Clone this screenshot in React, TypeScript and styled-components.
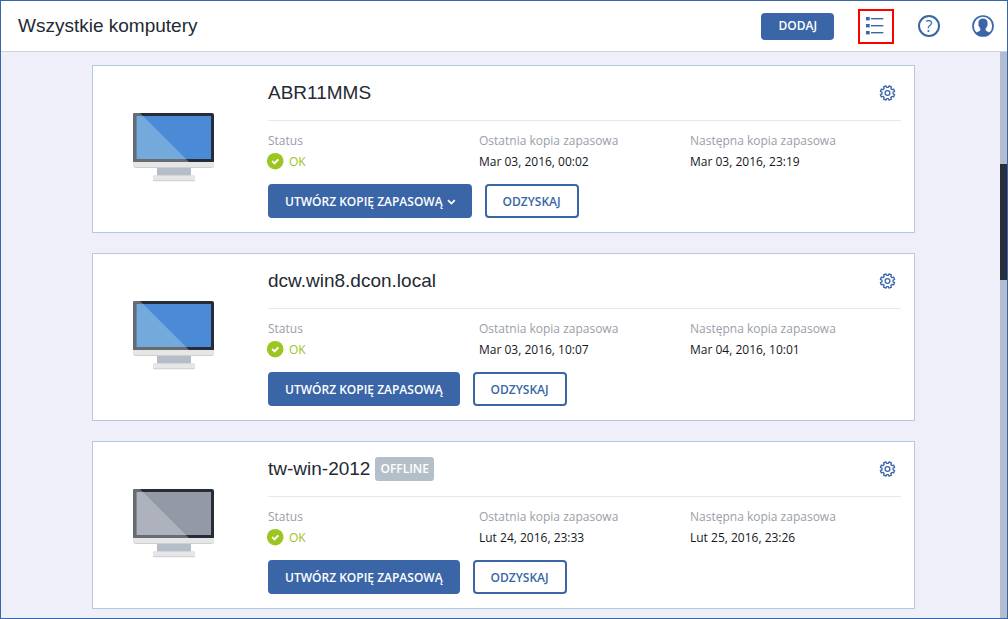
import React from 'react';
import styled, { createGlobalStyle } from 'styled-components';

const BLUE = '#3a66a7';

const GlobalStyle = createGlobalStyle`
  *, *::before, *::after { box-sizing: border-box; }
  body { margin: 0; }
  button { font: inherit; cursor: pointer; }
`;

const Page = styled.div`
  position: relative;
  display: flex;
  flex-direction: column;
  height: 100vh;
  border: 1px solid ${BLUE};
  background: #eeeff8;
  color: #242a33;
  font: 12px/20px 'Open Sans', 'Noto Sans', sans-serif;
`;

const TopBar = styled.header`
  display: flex;
  flex: none;
  align-items: center;
  justify-content: space-between;
  height: 51px;
  padding: 0 13px 0 17px;
  border-bottom: 1px solid #cdd3e5;
  background: #fff;
`;

const PageTitle = styled.h1`
  margin: 0;
  font: 400 19px/24px 'Liberation Sans', Arial, sans-serif;
`;

const Actions = styled.div<{ $gap: number }>`
  display: flex;
  align-items: center;
  gap: ${(p) => p.$gap}px;
`;

const AddButton = styled.button`
  height: 27px;
  padding: 0 17px;
  border: 0;
  border-radius: 4px;
  background: ${BLUE};
  color: #fff;
  font-weight: 600;
`;

const HighlightedButton = styled.button`
  display: grid;
  place-items: center;
  width: 36px;
  height: 35px;
  padding: 0;
  border: 2px solid #f00;
  background: none;
`;

const RoundButton = styled.button`
  display: grid;
  place-items: center;
  width: 22px;
  height: 22px;
  padding: 0;
  border: 0;
  border-radius: 50%;
  background: none;
  color: ${BLUE};
`;

const HelpButton = styled(RoundButton)`
  border: 2px solid ${BLUE};
  font-size: 16px;
  font-weight: 500;
  line-height: 18px;
`;

const Content = styled.main`
  flex: 1;
  min-height: 0;
  overflow: hidden;
`;

const CardList = styled.div`
  display: flex;
  flex-direction: column;
  gap: 20px;
  padding: 13px 92px 10px 91px;
`;

const ScrollTrack = styled.div`
  position: absolute;
  top: 51px;
  right: 0;
  bottom: 0;
  width: 7px;
  padding-top: 112px;
  background: #b3bdd0;
`;

const ScrollThumb = styled.div`
  height: 116px;
  background: #29303b;
`;

const Card = styled.article`
  display: grid;
  grid-template-columns: 175px 1fr;
  padding: 0 13px 14px 0;
  border: 1px solid #b5c8e1;
  background: #fff;
`;

const Picture = styled.div`
  padding: 47px 0 0 40px;
`;

const CardHeader = styled.header`
  display: flex;
  align-items: center;
  height: 55px;
  border-bottom: 1px solid #e8e8e8;
`;

const MachineName = styled.h2`
  margin: 0;
  font: 400 19px/24px 'Liberation Sans', Arial, sans-serif;
`;

const OfflineBadge = styled.span`
  height: 24px;
  margin-left: 5px;
  padding: 0 5px;
  border-radius: 3px;
  background: #b5bfc9;
  color: #fff;
  font-weight: 600;
  line-height: 24px;
`;

const GearButton = styled.button`
  display: flex;
  margin-left: auto;
  padding: 0 6px 0 0;
  border: 0;
  background: none;
`;

const Facts = styled.dl`
  display: grid;
  grid-template-columns: repeat(3, 1fr);
  margin: 0;
  padding-top: 10px;
`;

const Label = styled.dt`
  color: #9a9ea8;
`;

const Value = styled.dd<{ $ok?: boolean }>`
  display: flex;
  align-items: center;
  gap: 5px;
  margin: 0;
  color: ${(p) => (p.$ok ? '#9bc521' : '#14181e')};
  line-height: 21px;
`;

const CardActions = styled.div`
  display: flex;
  gap: 13px;
  margin-top: 12px;
`;

const ActionButton = styled.button<{ $primary?: boolean }>`
  display: flex;
  align-items: center;
  gap: 4px;
  height: 34px;
  padding: 1px ${(p) => (p.$primary ? 15 : 16)}px 0;
  border: 2px solid ${BLUE};
  border-radius: 4px;
  background: ${(p) => (p.$primary ? BLUE : '#fff')};
  color: ${(p) => (p.$primary ? '#fff' : BLUE)};
  font-weight: 600;
`;

const ListIcon = () => (
  <svg width="20" height="18" viewBox="0 0 20 18" fill={BLUE} aria-hidden="true">
    {[0, 7, 14].map((y) => (
      <React.Fragment key={y}>
        <rect x="0" y={y} width="3.7" height="3.4" />
        <rect x="5" y={y + 1} width="12.3" height="1.4" />
      </React.Fragment>
    ))}
  </svg>
);

const UserIcon = () => (
  <svg width="22" height="22" viewBox="0 0 22 22" aria-hidden="true">
    <circle cx="11" cy="11" r="10" fill="#fff" stroke={BLUE} strokeWidth="1.7" />
    <path
      fill={BLUE}
      d="M11 3.4c2.9 0 4.6 1.7 4.6 4.3 0 .7-.1 1.1-.2 1.5.5.3.3 1.5-.4 2-.3 1-.7 1.7-1.3 2.2v2c.4.9 3 1.300 4.600 2.300C16.400 19.900 13.800 21 11 21s-5.400-1.100-7.300-3.300c1.600-1 4.200-1.400 4.600-2.300v-2c-.6-.5-1-1.200-1.300-2.200-.7-.5-.9-1.700-.4-2-.1-.4-.2-.8-.2-1.500C6.400 5.100 8.100 3.400 11 3.400z"
    />
  </svg>
);

const GEAR_TEETH = Array.from({ length: 8 }, (_, i) => {
  const at = (deg: number, r: number) => {
    const a = ((i * 45 + 22.5 + deg) * Math.PI) / 180;
    return `${(8.5 + r * Math.cos(a)).toFixed(2)} ${(8 + r * Math.sin(a)).toFixed(2)}`;
  };
  return `${at(-14, 5.6)} L${at(-10, 7.3)} L${at(10, 7.3)} L${at(14, 5.6)}`;
});

const GearIcon = () => (
  <svg width="16" height="16" viewBox="0 0 16 16" overflow="visible" fill="none" stroke={BLUE} strokeWidth="1.3" strokeLinejoin="round" aria-hidden="true">
    <path d={`M${GEAR_TEETH.join(' L')}Z`} />
    <circle cx="8.5" cy="8" r="2.4" />
  </svg>
);

const CheckIcon = () => (
  <svg width="16" height="17" viewBox="1 0 16 17" overflow="visible" aria-hidden="true">
    <circle cx="8.2" cy="8.2" r="8.3" fill="#9bc521" />
    <path d="M5.2 8l2.4 2.4 3.7-4" fill="none" stroke="#fff" strokeWidth="2" />
  </svg>
);

const ChevronIcon = () => (
  <svg width="8" height="6" viewBox="0 0 8 6" overflow="visible" aria-hidden="true">
    <path d="M1 1.2l3.400 3.300 3.400-3.300" fill="none" stroke="#fff" strokeWidth="1.7" />
  </svg>
);

const MonitorIcon = ({ offline }: { offline?: boolean }) => (
  <svg width="82" height="70" viewBox="0 0 82 70" role="img" aria-label="Komputer">
    <rect x="24" y="53" width="34" height="11" fill="#b4bec8" />
    <rect x="20" y="62.5" width="42" height="5.7" rx="1" fill="#cfcfcf" />
    <rect x="20" y="62.5" width="42" height="4.7" rx="1" fill="#e6e6e6" />
    <path d="M0 48h81v4a3 3 0 0 1-3 3H3a3 3 0 0 1-3-3z" fill="#cfcfcf" />
    <path d="M0 48h81v3a3 3 0 0 1-3 3H3a3 3 0 0 1-3-3z" fill="#e6e6e6" />
    <path d="M0 49V2a2 2 0 0 1 2-2h77a2 2 0 0 1 2 2v47z" fill="#262d38" />
    <path d="M0 49V2a2 2 0 0 1 2-2h5l49 49z" fill="#676c72" />
    <rect x="3.7" y="3" width="74.3" height="43" fill={offline ? '#9399a5' : '#4a8ad7'} />
    <path d="M3.7 3H10l43 43H3.7z" fill={offline ? '#adb2bc' : '#74a9dc'} />
  </svg>
);

interface Machine {
  name: string;
  last: string;
  next: string;
  offline?: boolean;
  menu?: boolean;
}

const MACHINES: Machine[] = [
  { name: 'ABR11MMS', last: 'Mar 03, 2016, 00:02', next: 'Mar 03, 2016, 23:19', menu: true },
  { name: 'dcw.win8.dcon.local', last: 'Mar 03, 2016, 10:07', next: 'Mar 04, 2016, 10:01' },
  { name: 'tw-win-2012', last: 'Lut 24, 2016, 23:33', next: 'Lut 25, 2016, 23:26', offline: true },
];

const MachineCard = ({ name, last, next, offline, menu }: Machine) => (
  <Card>
    <Picture>
      <MonitorIcon offline={offline} />
    </Picture>
    <div>
      <CardHeader>
        <MachineName>{name}</MachineName>
        {offline && <OfflineBadge>OFFLINE</OfflineBadge>}
        <GearButton aria-label="Ustawienia">
          <GearIcon />
        </GearButton>
      </CardHeader>
      <Facts>
        <div>
          <Label>Status</Label>
          <Value $ok>
            <CheckIcon />
            OK
          </Value>
        </div>
        <div>
          <Label>Ostatnia kopia zapasowa</Label>
          <Value>{last}</Value>
        </div>
        <div>
          <Label>Następna kopia zapasowa</Label>
          <Value>{next}</Value>
        </div>
      </Facts>
      <CardActions>
        <ActionButton $primary>
          UTWÓRZ KOPIĘ ZAPASOWĄ
          {menu && <ChevronIcon />}
        </ActionButton>
        <ActionButton>ODZYSKAJ</ActionButton>
      </CardActions>
    </div>
  </Card>
);

export default function App() {
  return (
    <Page>
      <GlobalStyle />
      <TopBar>
        <PageTitle>Wszystkie komputery</PageTitle>
        <Actions $gap={24}>
          <AddButton>DODAJ</AddButton>
          <HighlightedButton aria-label="Widok listy">
            <ListIcon />
          </HighlightedButton>
          <Actions $gap={32}>
            <HelpButton aria-label="Pomoc">?</HelpButton>
            <RoundButton aria-label="Konto">
              <UserIcon />
            </RoundButton>
          </Actions>
        </Actions>
      </TopBar>
      <Content>
        <CardList>
          {MACHINES.map((m) => (
            <MachineCard key={m.name} {...m} />
          ))}
        </CardList>
      </Content>
      <ScrollTrack>
        <ScrollThumb />
      </ScrollTrack>
    </Page>
  );
}
